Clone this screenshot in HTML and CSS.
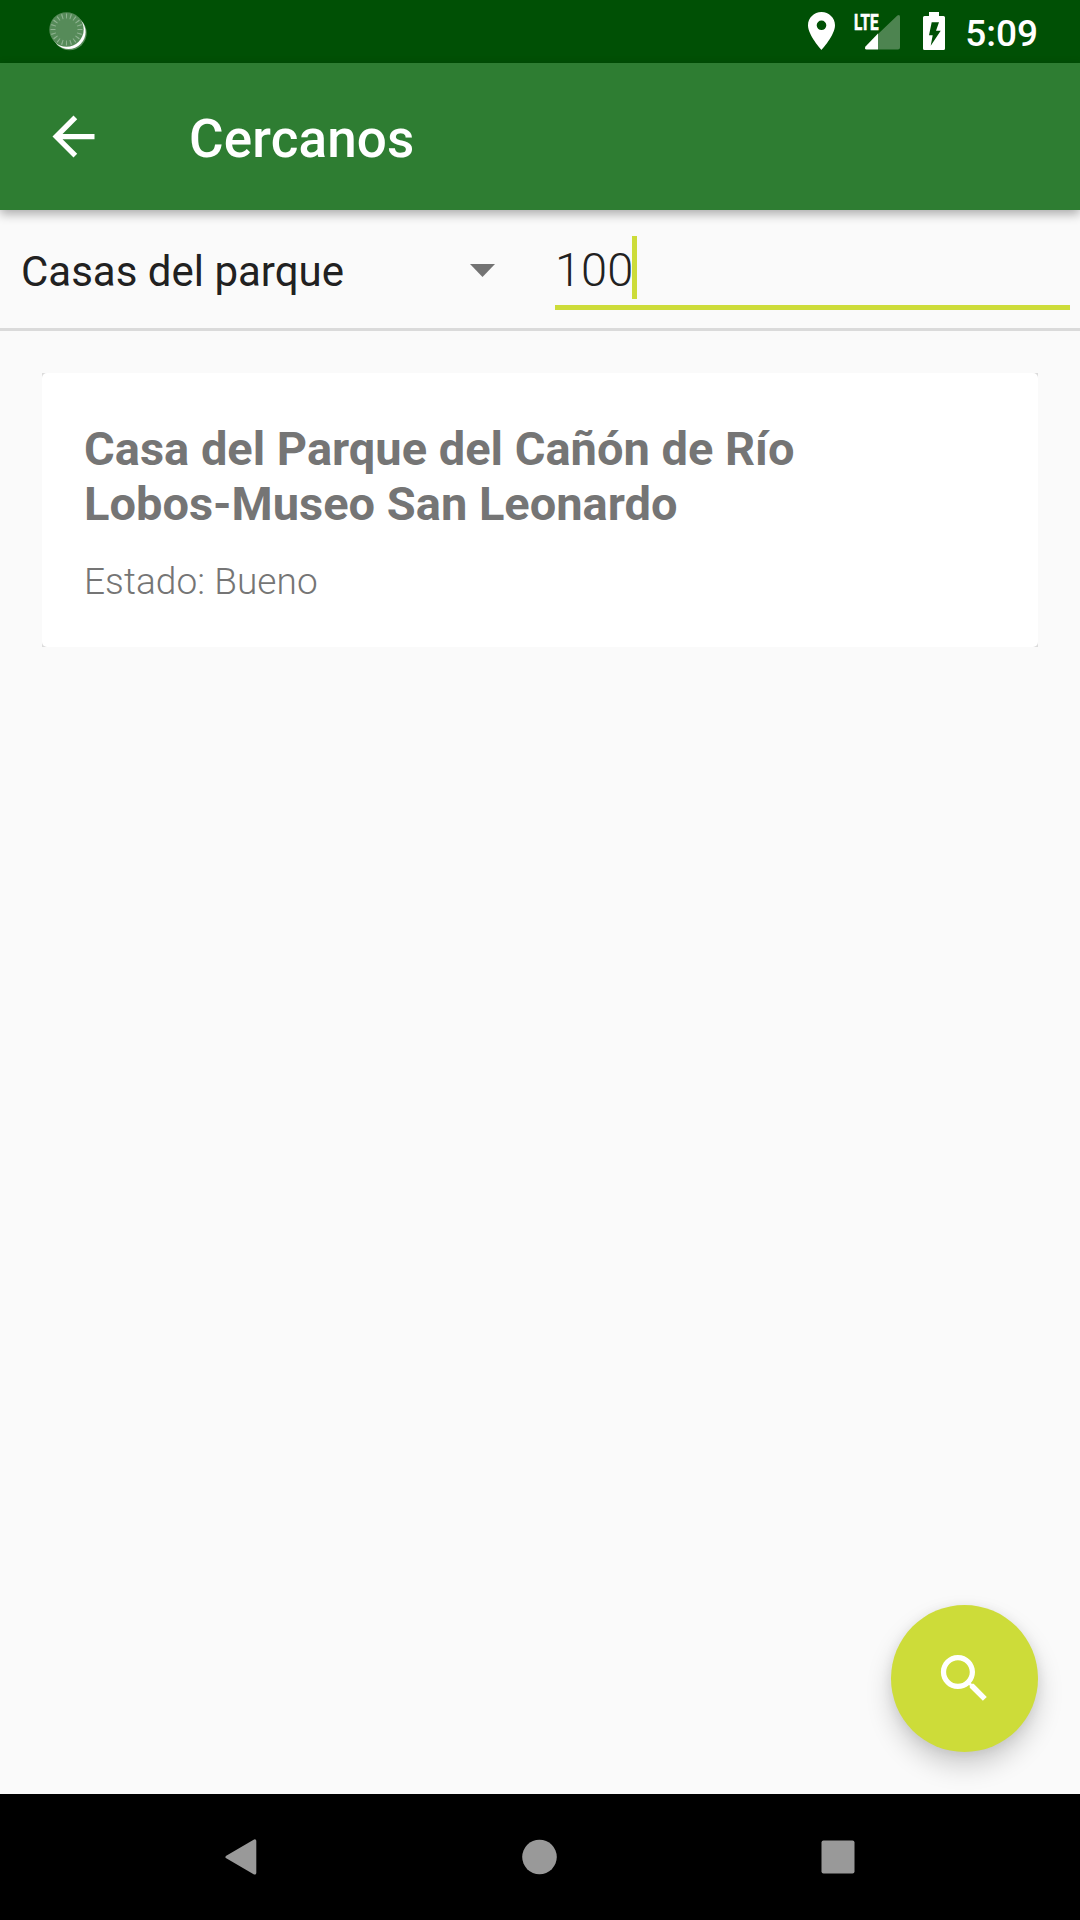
FILE: index.html
```html
<!DOCTYPE html>
<html lang="es">
<head>
<meta charset="utf-8">
<title>Cercanos</title>
<link rel="stylesheet" href="styles.css">
</head>
<body>
<div class="screen">
  <div class="status-bar">
    <svg class="status-sync" width="40" height="40" viewBox="0 0 40 40">
      <circle cx="21.500" cy="22" r="17.200" fill="#568b59"/>
      <circle cx="20.600" cy="21" r="17" fill="#fff"/>
      <circle cx="18.500" cy="18.500" r="17.200" fill="#568b59"/>
      <circle class="sync-ticks" cx="18.500" cy="18.500" r="13.500" pathLength="200"/>
    </svg>
    <div class="status-icons">
      <svg class="status-place" width="27" height="38" viewBox="5 2 14 20" preserveAspectRatio="none"><path fill="#fff" d="M12 2C8.130 2 5 5.130 5 9c0 5.250 7 13 7 13s7-7.750 7-13c0-3.870-3.130-7-7-7zm0 9.500a2.500 2.500 0 0 1 0-5 2.500 2.500 0 0 1 0 5z"/></svg>
      <svg class="status-signal" width="46" height="38" viewBox="0 0 46 38">
        <path fill="#fff" fill-opacity=".3" d="M24 21V22L43.400 3.600Q46 2 46 5V35.500Q46 37.500 44 37.500H24z"/>
        <path fill="#fff" d="M24 21.500V37.500H12.500Q10 37 11.500 34.500z"/>
        <text class="signal-label" x="0" y="17.500" textLength="24.500" lengthAdjust="spacingAndGlyphs">LTE</text>
      </svg>
      <svg class="status-battery" width="22" height="38" viewBox="0 0 22 38"><path fill="#fff" fill-rule="evenodd" d="M6 0H16V4H20.500Q22 4 22 5.500V36.500Q22 38 20.500 38H1.500Q0 38 0 36.500V5.500Q0 4 1.500 4H6zM8.700 10.300L6 23.300H9.700L7.700 33.700L17.700 18.700H13L16 10.300z"/></svg>
      <span class="clock">5:09</span>
    </div>
  </div>

  <header class="toolbar">
    <svg class="back" width="63" height="63" viewBox="0 0 24 24"><path fill="#fff" d="M20 11H7.830l5.590-5.590L12 4l-8 8 8 8 1.410-1.410L7.830 13H20v-2z"/></svg>
    <h1 class="toolbar-title">Cercanos</h1>
  </header>

  <div class="filters">
    <div class="spinner">
      <span>Casas del parque</span>
      <svg class="spinner-arrow" width="26" height="13" viewBox="0 0 26 13"><path fill="#737373" d="M0 0H25L12.500 13z"/></svg>
    </div>
    <div class="distance"><span class="distance-value">100</span><i class="caret"></i></div>
  </div>

  <main class="results">
    <div class="card-shell">
      <article class="card">
        <h2 class="card-title">Casa del Parque del Cañón de Río Lobos-Museo San Leonardo</h2>
        <p class="card-state">Estado: Bueno</p>
      </article>
    </div>
    <div class="fab">
      <svg width="63" height="63" viewBox="0 0 24 24"><path fill="#fff" d="M15.500 14h-.79l-.28-.27C15.410 12.590 16 11.110 16 9.500 16 5.910 13.090 3 9.500 3S3 5.910 3 9.500 5.910 16 9.500 16c1.610 0 3.090-.59 4.230-1.570l.27.28v.79l5 4.990L20.490 19l-4.990-5zm-6 0C7.010 14 5 11.990 5 9.500S7.010 5 9.500 5 14 7.010 14 9.500 11.990 14 9.500 14z"/></svg>
    </div>
  </main>

  <nav class="nav-bar">
    <svg width="36" height="38" viewBox="0 0 36 38"><path fill="#999" stroke="#999" stroke-width="3" stroke-linejoin="round" d="M4 19L31.800 2.900V35.100z"/></svg>
    <svg width="36" height="36" viewBox="0 0 36 36"><circle cx="17.500" cy="18" r="17.300" fill="#999"/></svg>
    <svg width="34" height="34" viewBox="0 0 34 34"><rect x=".5" y=".5" width="33" height="33" rx="2" fill="#999"/></svg>
  </nav>
</div>
</body>
</html>
```
FILE: styles.css
```css
* { box-sizing: border-box; margin: 0; padding: 0; }

body {
  font-family: Roboto, "Noto Sans", sans-serif;
  background: #fafafa;
}

svg { display: block; flex: none; overflow: visible; }

.screen {
  width: 1080px;
  height: 1920px;
  display: flex;
  flex-direction: column;
  overflow: hidden;
}

.status-bar {
  height: 63px;
  flex: none;
  display: flex;
  justify-content: space-between;
  align-items: flex-start;
  padding: 11px 42px 0 48px;
  background: #005005;
}

.sync-ticks {
  fill: none;
  stroke: #8fb391;
  stroke-width: 5;
  stroke-dasharray: 2.5 7.5;
  stroke-dashoffset: 1.25;
}

.status-icons { display: flex; padding-top: 1px; }
.status-signal { margin-left: 19px; }
.status-battery { margin-left: 23px; }

.signal-label {
  font: 700 22.5px Roboto, sans-serif;
  fill: #fff;
  stroke: #fff;
  stroke-width: .7px;
}

.clock {
  margin-left: 20px;
  font-size: 37px;
  font-weight: 500;
  line-height: 43px;
  color: #fff;
}

.toolbar {
  height: 147px;
  flex: none;
  display: flex;
  align-items: center;
  padding-left: 42px;
  background: #2e7d32;
  box-shadow: 0 4px 10px rgba(0, 0, 0, .32);
  position: relative;
  z-index: 1;
}

.toolbar-title {
  margin-left: 84px;
  padding-top: 4px;
  font-size: 53px;
  font-weight: 500;
  line-height: 60px;
  letter-spacing: .15px;
  color: #fff;
}

.filters {
  height: 121px;
  flex: none;
  display: flex;
  align-items: flex-start;
  padding: 26px 10px 0 21px;
  border-bottom: 3px solid #dadada;
}

.spinner {
  width: 534px;
  display: flex;
  align-items: center;
  justify-content: space-between;
  padding-right: 59px;
  font-size: 42px;
  line-height: 71px;
  color: #212121;
}

.spinner-arrow { margin-bottom: 2px; }

.distance {
  flex: 1;
  height: 74px;
  display: flex;
  align-items: flex-start;
  border-bottom: 5px solid #cddc39;
  font-size: 47px;
  font-weight: 300;
  line-height: 68px;
  color: #212121;
}

.distance-value { width: 77px; }

.caret { width: 5px; height: 63px; background: #cddc39; }

.results {
  flex: 1;
  display: flex;
  flex-direction: column;
  justify-content: space-between;
  padding: 42px;
}

.card-shell { background: #dcdcdc; }

.card {
  height: 274px;
  padding: 48px 42px 0;
  border-radius: 5px;
  background: #fff;
  color: #757575;
}

.card-title {
  width: 760px;
  font-size: 47px;
  font-weight: 700;
  line-height: 55px;
}

.card-state {
  margin-top: 29px;
  font-size: 37px;
  font-weight: 300;
  line-height: 43px;
  letter-spacing: .07px;
}

.fab {
  width: 147px;
  height: 147px;
  align-self: flex-end;
  display: flex;
  align-items: center;
  justify-content: center;
  border-radius: 50%;
  background: #cddc39;
  box-shadow: 0 14px 26px rgba(0, 0, 0, .18), 0 2px 12px rgba(0, 0, 0, .08);
}

.nav-bar {
  height: 126px;
  flex: none;
  display: flex;
  align-items: center;
  justify-content: space-between;
  padding: 0 225px 0 223px;
  background: #000;
}
```
